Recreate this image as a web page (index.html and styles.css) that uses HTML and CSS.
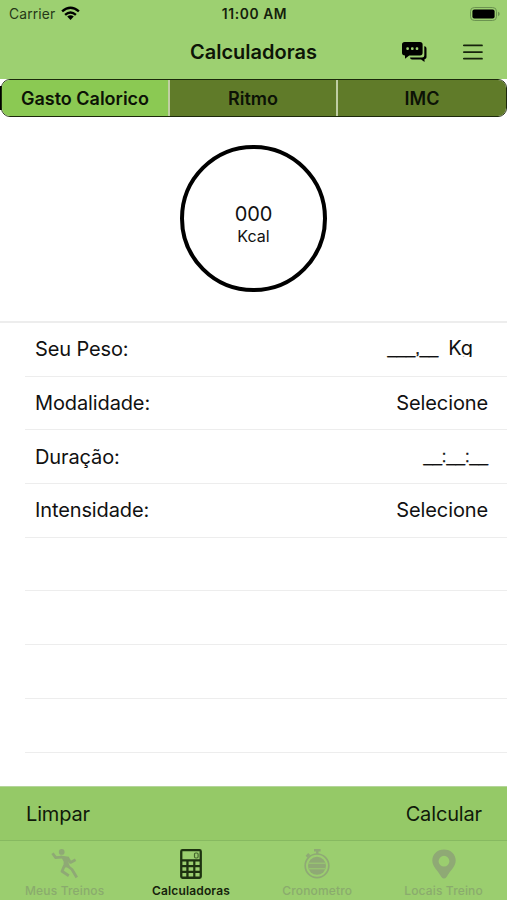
FILE: index.html
```html
<!DOCTYPE html>
<html lang="pt-BR">
<head>
<meta charset="utf-8">
<meta name="viewport" content="width=device-width, initial-scale=1">
<title>Calculadoras</title>
<link rel="stylesheet" href="styles.css">
</head>
<body>
<div class="app">
  <header class="header">
    <div class="status">
      <div class="carrier"><span class="carrier-name">Carrier</span>
        <svg width="19" height="15" viewBox="0 0 19 15"><g fill="none" stroke="#000" stroke-width="2.4"><path d="M1.1 5.4Q9.5-2 17.9 5.4"/><path d="M4.1 8.8Q9.5 4 14.9 8.8"/></g><path d="M6.2 10.6Q9.5 7.9 12.8 10.6L9.5 14Z"/></svg>
      </div>
      <span class="clock">11:00 AM</span>
      <svg class="battery" width="30" height="14" viewBox="0 0 30 14"><rect x=".5" y=".5" width="26" height="13" rx="3.8" fill="none" stroke="#6b9350"/><rect x="2.4" y="2.4" width="22.2" height="9.2" rx="2"/><path d="M28 4.8q1.7.6 1.7 2.2T28 9.2Z" fill="#6b9350"/></svg>
    </div>
    <div class="nav">
      <h1 class="title">Calculadoras</h1>
      <div class="actions">
        <svg width="25" height="20" viewBox="0 0 25 20"><path d="M2.7 0H18q2.6 0 2.6 2.6v8.2q0 2.6-2.6 2.6H7.2L3 16.8v-3.4Q0 13.4 0 10.8V2.6Q0 0 2.7 0Z"/><path d="M22.3 4.2h.5q1.7.5 1.7 2.2v8.9q0 1.7-2 1.9V20l-3.4-2.5H10q-1.8 0-2-2h12.2q2.1 0 2.1-2.1Z"/><g fill="#9dd071"><rect x="4.3" y="5.2" width="2.6" height="2.8" rx="1"/><rect x="9" y="5.2" width="2.6" height="2.8" rx="1"/><rect x="13.7" y="5.2" width="2.6" height="2.8" rx="1"/></g></svg>
        <svg width="20" height="16" viewBox="0 0 20 16"><path d="M.8 1.4h18.2M.8 8.1h18.2M.8 14.7h18.2" stroke="#16230c" stroke-width="1.7" stroke-linecap="round"/></svg>
      </div>
    </div>
  </header>
  <div class="segment-wrap">
    <div class="segments">
      <div class="segment active"><span>Gasto Calorico</span></div>
      <div class="segment"><span>Ritmo</span></div>
      <div class="segment"><span>IMC</span></div>
    </div>
  </div>
  <section class="result">
    <div class="ring"><span class="amount">000</span><span class="unit">Kcal</span></div>
  </section>
  <main class="list">
    <div class="row"><span>Seu Peso:</span><div class="weight"><span class="blank">___,__</span><span class="kg">Kg</span></div></div>
    <div class="row"><span>Modalidade:</span><span>Selecione</span></div>
    <div class="row"><span>Duração:</span><span class="blank">__:__:__</span></div>
    <div class="row"><span>Intensidade:</span><span>Selecione</span></div>
    <div class="row"></div>
    <div class="row"></div>
    <div class="row"></div>
    <div class="row"></div>
  </main>
  <div class="toolbar"><span>Limpar</span><span>Calcular</span></div>
  <nav class="tabs">
    <div class="tab">
      <svg width="28" height="30" viewBox="0 0 28 30"><g fill="none" stroke="#8fa975" stroke-width="2.8" stroke-linejoin="round"><path d="M1.5 4.2 4.7 8.6 11 8.2"/><path d="M16.5 8.5 19.5 13.4 24.6 10.8"/><path d="m16 16.5 5 4 4.8 8"/><path d="m13.5 16.5-2.5 5.8 6.8 4.4"/></g><circle cx="10.7" cy="2.9" r="2.9" fill="#8fa975"/><path d="m9.4 6.6 8.4 1.2-.2 6.2 1.6 4.2-6.8.4.3-5.8Z" fill="#8fa975"/></svg>
      <span>Meus Treinos</span>
    </div>
    <div class="tab selected">
      <svg width="28" height="30" viewBox="0 0 28 30"><path fill="#1d3210" fill-rule="evenodd" d="M5.5 0h17q2.4 0 2.4 2.4v25.2q0 2.4-2.4 2.4h-17q-2.4 0-2.4-2.4V2.4Q3.1 0 5.5 0ZM5.4 2.2v8h17.2v-8ZM5.4 12.5v3.6h3.9v-3.6Zm6.2 0v3.6h4.6v-3.6Zm6.8 0v3.6h4.2v-3.6ZM5.4 18.2v3.6h3.9v-3.6Zm6.2 0v3.6h4.6v-3.6Zm6.8 0v3.6h4.2v-3.6ZM5.4 24v3.6h3.9V24Zm6.2 0v3.6h4.6V24Zm6.8 0v3.6h4.2V24Z"/><rect x="17.5" y="4" width="3.6" height="5" rx="1.2" fill="none" stroke="#44652e" stroke-width="1.2"/></svg>
      <span>Calculadoras</span>
    </div>
    <div class="tab">
      <svg width="28" height="30" viewBox="0 0 28 30"><g fill="none" stroke="#8fa975"><circle cx="14" cy="16.8" r="11.8" stroke-width="1.7"/><path d="M11 1.3h6.6M14.3 1v4.3" stroke-width="2.4"/><path d="m3.6 7.7 2.6-2.6" stroke-width="2.8"/></g><circle cx="14" cy="16.8" r="9" fill="#8fa975"/><path d="M6 14.2h16M6 19.8h16" stroke="#9bce70"/></svg>
      <span>Cronometro</span>
    </div>
    <div class="tab">
      <svg width="28" height="30" viewBox="0 0 28 30"><path fill="#8fa975" fill-rule="evenodd" d="M14 .5C7.3.5 2.3 5.4 2.3 11.5c0 6.3 5.6 10 9.1 16.5Q14 31 16.6 28c3.5-6.5 9.1-10.2 9.1-16.5C25.7 5.4 20.7.5 14 .5Zm0 6.3a5.4 5.4 0 1 1 0 10.8 5.4 5.4 0 0 1 0-10.8Z"/></svg>
      <span>Locais Treino</span>
    </div>
  </nav>
</div>
</body>
</html>
```
FILE: styles.css
```css
* { box-sizing: border-box; }
body { margin: 0; background: #fff; color: #111; font-family: Inter, "Liberation Sans", sans-serif; }
svg { display: block; flex: none; }
span { white-space: nowrap; }
.app { width: 507px; height: 900px; display: flex; flex-direction: column; overflow: hidden; }
.header { height: 79px; background: #9dd071; flex: none; }
.status { height: 27px; display: grid; grid-template-columns: 1fr auto 1fr; align-items: center; padding: 0 7px 0 9px; }
.carrier { display: flex; align-items: center; gap: 6px; }
.carrier-name { font-size: 13.8px; color: #263817; letter-spacing: .15px; }
.clock { font-size: 13.8px; font-weight: 600; color: #14200b; letter-spacing: .6px; }
.battery { justify-self: end; }
.nav { height: 50px; display: grid; grid-template-columns: 1fr auto 1fr; align-items: center; padding-right: 24px; padding-left: 24px; }
.title { grid-column: 2; margin: 0; font-size: 20px; line-height: 24px; font-weight: 600; color: #0d1507; }
.actions { display: flex; justify-content: flex-end; align-items: center; gap: 36px; }
.segment-wrap { height: 38px; flex: none; background: linear-gradient(#000, #000) 0 7px / 2px 24px no-repeat; padding-left: 1px; }
.segments { height: 38px; display: grid; grid-template-columns: 166px 168px 1fr; border: 1.5px solid #1c290b; border-radius: 9px; overflow: hidden; }
.segment { display: flex; align-items: center; justify-content: center; background: #607b29; color: #0c1206; font-weight: 600; font-size: 18px; }
.segment + .segment { border-left: 2px solid #c0cea3; }
.segment.active { background: #8bc953; }
.result { height: 204px; flex: none; display: flex; justify-content: center; padding-top: 28px; }
.ring { width: 147px; height: 147px; border: 4px solid #000; border-radius: 50%; display: flex; flex-direction: column; align-items: center; padding-top: 53px; }
.amount { font-size: 20px; line-height: 24px; letter-spacing: -.2px; }
.unit { font-size: 16px; line-height: 20px; }
.list { height: 465px; flex: none; border-top: 2px solid #ededed; padding-left: 25px; }
.row { height: 53.7px; border-bottom: 1.5px solid #ededed; display: flex; align-items: center; justify-content: space-between; padding: 0 19px 0 10px; font-size: 20px; letter-spacing: -.12px; }
.weight { display: flex; gap: 10px; padding-right: 15px; }
.kg { height: 21px; line-height: 24px; overflow: hidden; margin-top: -1px; }
.blank { font-family: "Liberation Sans", sans-serif; font-size: 16.6px; line-height: 24px; letter-spacing: 0; -webkit-text-stroke: .35px #111; }
.toolbar { height: 54px; flex: none; background: #95c967; border-top: 1px solid #b4d59a; display: flex; justify-content: space-between; align-items: center; padding: 0 25px 0 26px; font-size: 20px; letter-spacing: -.15px; color: #10190a; }
.tabs { height: 60px; flex: none; background: #9bce6f; border-top: 1px solid #87b961; display: grid; grid-template-columns: repeat(4, 126.3px); padding-left: 1.5px; }
.tab { display: flex; flex-direction: column; align-items: center; padding-top: 8px; gap: 4px; font-size: 12px; line-height: 15px; font-weight: 500; letter-spacing: .15px; color: #8aab6d; }
.tab.selected { color: #16230c; font-weight: 600; }
```
